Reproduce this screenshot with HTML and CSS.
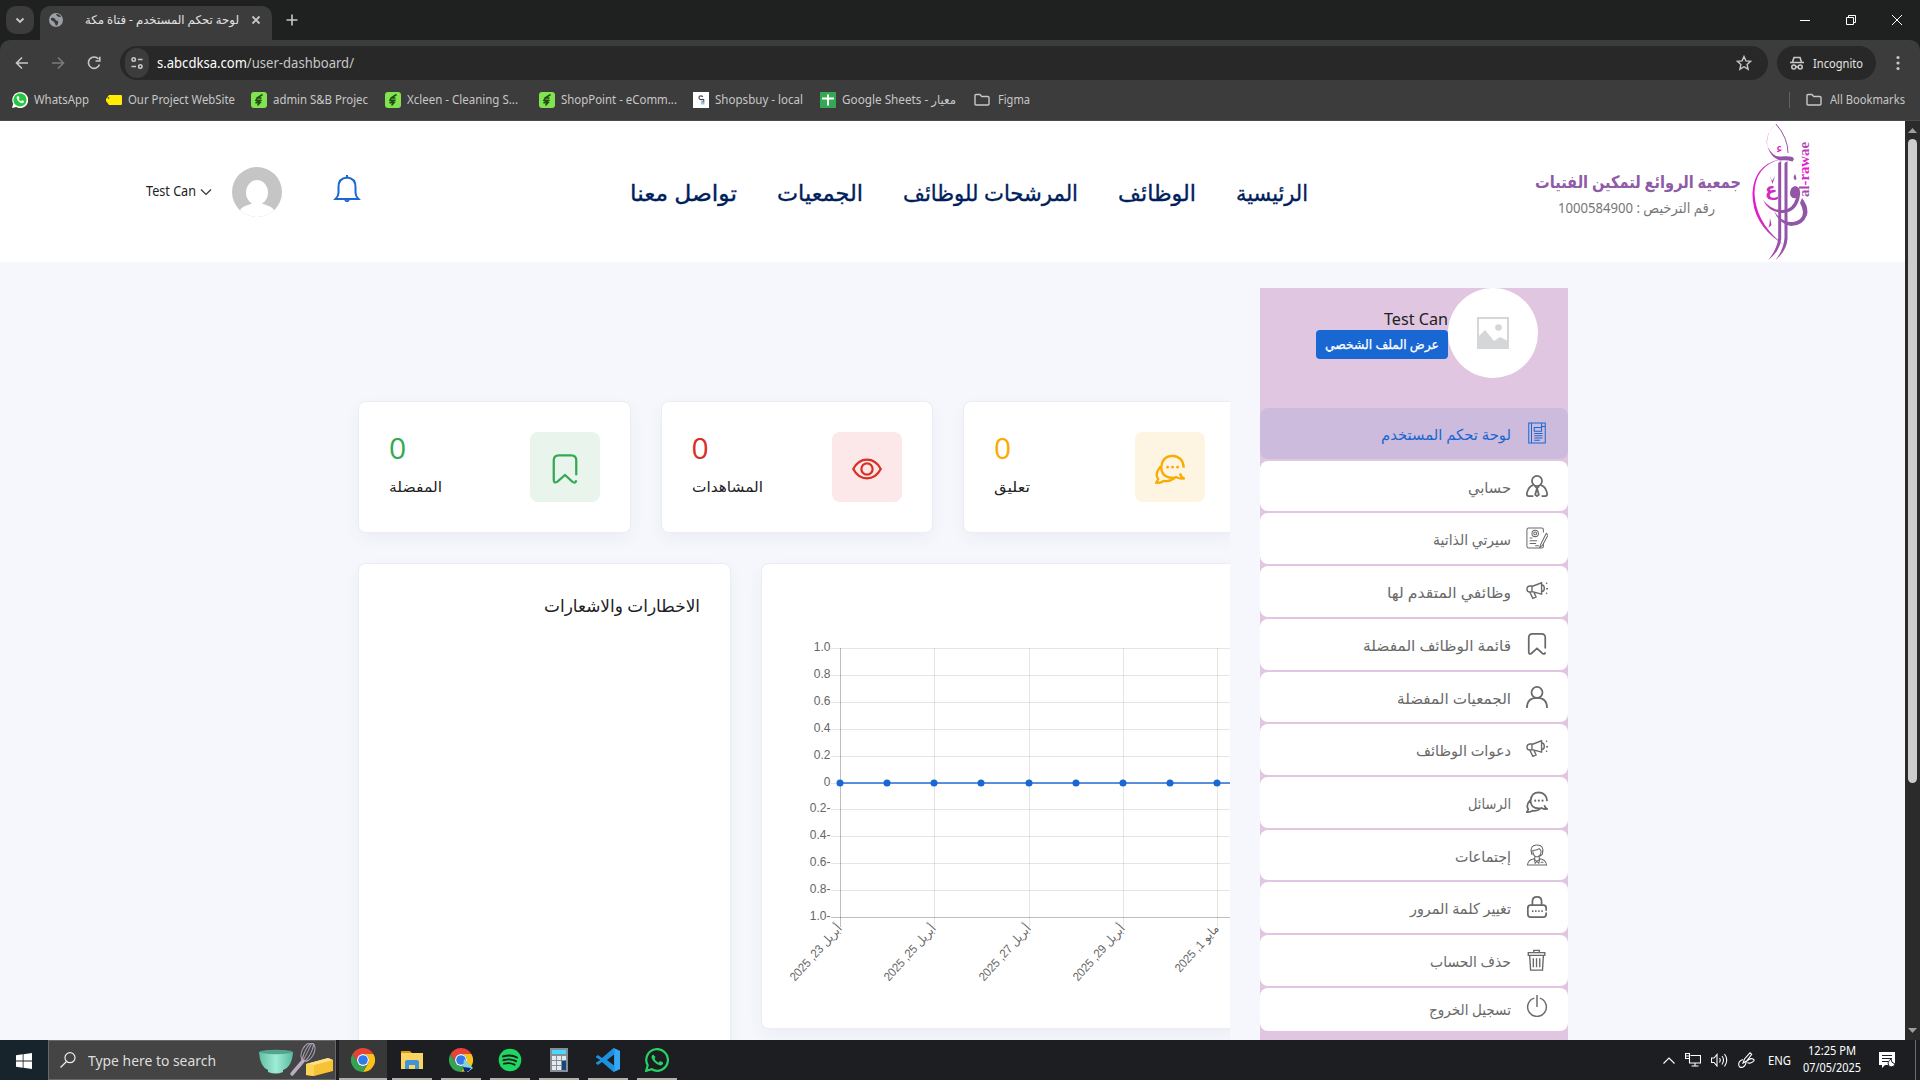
FILE: index.html
```html
<!DOCTYPE html>
<html lang="ar">
<head>
<meta charset="utf-8">
<title>لوحة تحكم المستخدم - فتاة مكة</title>
<link rel="stylesheet" href="styles.css">
</head>
<body>
<svg class="defs" width="0" height="0" aria-hidden="true">
  <defs>
    <symbol id="shopify" viewBox="0 0 16 16"><rect width="16" height="16" rx="3" fill="#82e350"/><path d="M11.500 2.500 6 6 5 8.300h5.500L4.500 10.700H9L6.500 13.500M6 6h4.500" fill="none" stroke="#1f4c12" stroke-width="1.500"/></symbol>
    <symbol id="folder" viewBox="0 0 16 16"><path d="M1 3.500q0-1 1-1h4l1.700 2H14q1 0 1 1V12q0 1-1 1H2q-1 0-1-1z" fill="none" stroke="#c7c7c7" stroke-width="1.400"/></symbol>
    <symbol id="bookmark" viewBox="0 0 24 24"><path d="M21 17V5q0-4-4-4H7Q3 1 3 5v15.500q0 3.300 2.800 1.800L12 16.800l6 5.500q2.500 1.500 3-1.300"/></symbol>
    <symbol id="chat" viewBox="0 0 24 24"><path d="M20 15.500q.8 3 3 4-3 .7-6-1-1 .5-3 .5-9-.5-9-8.500Q6 1.500 14 1.500q8.500.5 9 9.500M4.500 10Q-.5 16 2.500 20L1 23q4 .3 6-1.500 5 1 9-2.500"/><path d="M10 10.500h.1M14 10.500h.1M18 10.500h.1" stroke-linecap="round" stroke-width="2.200"/></symbol>
    <symbol id="horn" viewBox="0 0 24 24"><path d="M17 3 8 6.500H4q-3 .5-3 3.500t3 3h4l9 2.500zM6.500 7v6M4 13l3.500 7 3.500-1.500L8.500 13M17 5q3 .5 3 4t-3 4M22 4l1-1M22 9.500h2M22 14l1 1"/></symbol>
    <symbol id="chrome" viewBox="0 0 24 24"><path d="M1.600 6A12 12 0 0 1 22.400 6H12a6 6 0 0 0-5.200 9z" fill="#e84335"/><path d="M22.400 6A12 12 0 0 1 12 24l5.200-9A6 6 0 0 0 12 6z" fill="#fbc116"/><path d="M1.600 6A12 12 0 0 0 12 24l5.200-9a6 6 0 0 1-10.400 0z" fill="#34a354"/><circle cx="12" cy="12" r="6" fill="#fff"/><circle cx="12" cy="12" r="4.800" fill="#3279ea"/></symbol>
  </defs>
</svg>

<div class="tabs">
  <div class="tab-search"><svg width="10" height="10" viewBox="0 0 10 10"><path d="M1.500 3.500 5 7l3.500-3.500" class="ui bold"/></svg></div>
  <div class="tab">
    <svg width="14" height="14" viewBox="0 0 14 14"><circle cx="7" cy="7" r="7" fill="#9aa0a6"/><path d="M2 5q3-1 4 1t3 2q1 3-2 5-1-3-2-4T2 7zM7 1q0 2 3 3l2 0q-1-3-5-3z" fill="#3c3c3c"/></svg>
    <span class="tab-title"><span dir="rtl" data-w="154">لوحة تحكم المستخدم - فتاة مكة</span></span>
    <svg width="10" height="10" viewBox="0 0 10 10"><path d="m1.500 1.500 7 7m0-7-7 7" class="ui bold"/></svg>
  </div>
  <svg class="new-tab" width="12" height="12" viewBox="0 0 12 12"><path d="M6 .5v11M.5 6h11" class="ui"/></svg>
  <div class="win">
    <svg width="12" height="12" viewBox="0 0 12 12"><path d="M1 6h10" stroke="#fff" shape-rendering="crispEdges"/></svg>
    <svg width="12" height="12" viewBox="0 0 12 12"><path d="M1.500 3.500h7v7h-7zM3.500 3V1.500h7v7H9" fill="none" stroke="#fff"/></svg>
    <svg width="12" height="12" viewBox="0 0 12 12"><path d="m1 1 10 10m0-10L1 11" stroke="#fff"/></svg>
  </div>
</div>

<div class="toolbar">
  <svg class="nav-ic" width="16" height="16" viewBox="0 0 16 16"><path d="M14 8H2.500M8 2.500 2.500 8 8 13.500" class="ui"/></svg>
  <svg class="nav-ic dim" width="16" height="16" viewBox="0 0 16 16"><path d="M2 8h11.500M8 2.500 13.500 8 8 13.500" class="ui"/></svg>
  <svg class="nav-ic" width="16" height="16" viewBox="0 0 16 16"><path d="M13.500 9.500a5.700 5.700 0 1 1-1-5.500M13.800 1.800V6H9.500" class="ui"/></svg>
  <div class="omnibox">
    <span class="site"><svg width="14" height="14" viewBox="0 0 14 14"><path d="M8 3.500h4.500M1.500 10.500H6" class="ui"/><circle cx="3.700" cy="3.500" r="1.700" class="ui"/><circle cx="10.300" cy="10.500" r="1.700" class="ui"/></svg></span>
    <span class="url" data-w="197">s.abcdksa.com<i>/user-dashboard/</i></span>
    <svg class="star" width="16" height="16" viewBox="0 0 16 16"><path d="m8 1.500 1.900 4.400 4.800.4-3.600 3.200 1 4.700L8 11.700l-4.100 2.500 1-4.700L1.300 6.300l4.800-.4z" fill="none" stroke="#c7c7c7" stroke-width="1.400"/></svg>
  </div>
  <div class="incognito"><svg width="16" height="16" viewBox="0 0 16 16"><path d="M1 7.500h14M3.500 7 5 2.500h6L12.500 7M6.500 11.700h3" class="ui"/><circle cx="4.800" cy="12" r="2" class="ui"/><circle cx="11.200" cy="12" r="2" class="ui"/></svg><span data-w="50">Incognito</span></div>
  <svg class="dots" width="4" height="16" viewBox="0 0 4 16"><g fill="#c7c7c7"><circle cx="2" cy="2.500" r="1.600"/><circle cx="2" cy="8" r="1.600"/><circle cx="2" cy="13.500" r="1.600"/></g></svg>
</div>

<div class="bookmarks">
  <div class="bm"><svg viewBox="0 0 16 16"><path d="M0 16l1.200-4.200A8 8 0 1 1 4.300 15z" fill="#fff"/><circle cx="8" cy="7.900" r="6.600" fill="#24c73f"/><path d="M5.300 4.300q-1.500 1.500.5 4.100t4.800 2.800q2-.8 1.200-2.200L10 8.200l-1 1Q7.500 8.700 6.700 7l.8-1-.8-1.800z" fill="#fff"/></svg><span data-w="55">WhatsApp</span></div>
  <div class="bm"><svg viewBox="0 0 16 16"><path d="M3 3h12q1 0 1 1v8q0 1-1 1H3l-3-4V7z" fill="#ffec00"/><circle cx="2.500" cy="6" r=".8" fill="#333"/></svg><span data-w="107">Our Project WebSite</span></div>
  <div class="bm"><svg><use href="#shopify"/></svg><span data-w="95">admin S&amp;B Projec</span></div>
  <div class="bm"><svg><use href="#shopify"/></svg><span data-w="111">Xcleen - Cleaning S...</span></div>
  <div class="bm shop"><svg><use href="#shopify"/></svg><span data-w="116">ShopPoint - eComm...</span></div>
  <div class="bm"><svg viewBox="0 0 16 16"><rect width="16" height="16" fill="#fff"/><path d="M10 4.500Q6 3 6 5.500t3 2 1 3" fill="none" stroke="#444" stroke-width="1.200"/><path d="M8 8.500h3.500v4H8z" fill="#7aa3d8" opacity=".7"/></svg><span data-w="88">Shopsbuy - local</span></div>
  <div class="bm"><svg viewBox="0 0 16 16"><rect width="16" height="16" rx="1" fill="#34a853"/><path d="M8 2.500v11M2 6.500h12" stroke="#fff" stroke-width="2"/></svg><span data-w="114">Google Sheets - معيار</span></div>
  <div class="bm figma"><svg><use href="#folder"/></svg><span data-w="32">Figma</span></div>
  <div class="bm all"><svg><use href="#folder"/></svg><span data-w="75">All Bookmarks</span></div>
</div>

<div class="viewport">
<div class="page">
  <header class="header">
    <span class="hname" data-w="50">Test Can</span>
    <svg class="hchev" width="12" height="8" viewBox="0 0 12 8"><path d="m1 1.500 5 5 5-5" fill="none" stroke="#333" stroke-width="1.200"/></svg>
    <svg class="havatar" width="50" height="50" viewBox="0 0 50 50"><defs><clipPath id="round"><circle cx="25" cy="25" r="25"/></clipPath></defs><g clip-path="url(#round)"><path d="M0 0h50v50H0z" fill="#c5c5c5"/><ellipse cx="25" cy="25.500" rx="11" ry="12.500" fill="#fff"/><path d="M20 36.500h10l8 3q4 2 5 6v6H7v-6q1-4 5-6z" fill="#fff"/></g></svg>
    <svg class="bell" width="28" height="30" viewBox="0 0 28 30"><path d="M14 3.500q8.500.7 8.500 9.500v6q0 3 3 6h-23q3-3 3-6v-6Q5.500 4.200 14 3.500zM14 1v3M12 26q2 2.500 4 0" fill="none" stroke="#1967d2" stroke-width="2"/></svg>
    <nav class="menu">
      <span data-w="107">تواصل معنا</span><span data-w="86">الجمعيات</span><span data-w="175">المرشحات للوظائف</span><span data-w="78">الوظائف</span><span data-w="72">الرئيسية</span>
    </nav>
    <div class="brand"><b data-w="206">جمعية الروائع لتمكين الفتيات</b><span dir="rtl" data-w="157">رقم الترخيص : 1000584900</span></div>
    <svg class="emblem" width="60" height="138" viewBox="0 0 60 138">
      <defs>
        <linearGradient id="ink" x1="0" y1="0" x2="60" y2="0" gradientUnits="userSpaceOnUse"><stop offset="0" stop-color="#f50fd0"/><stop offset=".5" stop-color="#9455a8"/><stop offset="1" stop-color="#8f57a6"/></linearGradient>
        <linearGradient id="ink2" x1="0" y1="0" x2="55" y2="0" gradientUnits="userSpaceOnUse"><stop offset="0" stop-color="#8f57a6"/><stop offset=".5" stop-color="#f50fd0"/><stop offset="1" stop-color="#a34fb0"/></linearGradient>
      </defs>
      <g fill="url(#ink)">
        <path d="M25 .5Q8 18 22 31q3 3 8 2.500 8-.5 11.500.5l1.500 2-1.500 2.500q-6-2-13-1Q20 34 17 25 13 12 25 .5z"/>
        <path d="M33 35.500Q4 41 3.500 70q1 30 29.500 52Q1 102 1.500 70 3 40 33 35.500z"/>
        <path d="M27.200 40l3-2v78q-1 12-13 21 9-11 10-22zM33.500 40l3-2v78q-1 12-12 21 8-10 9-22z"/>
        <path d="M44 63q6 1 5 9-2 16-16 18-15 0-21-13 9 11 20 10 10-1 13-12-5 1-6-4 0-7 5-8z"/>
        <path d="M51 75q7 9 5 17-4 11-16 11-12-2-17-15 8 12 19 11 10-2 10-10-1-6-3-9z"/>
        <path d="M18.500 52l2.500 6 3-5-2.500 8zM44 51q-3 5 .5 6 2-1-.5-6zM19 95l1.500 7-3 3 1-4z"/>
      </g>
      <path d="M25 1q12 14 12 29" fill="none" stroke="#9455a8"/>
      <text x="25" y="30" class="calli">ء</text><text x="14" y="73" class="calli big">ع</text>
      <text transform="translate(57.500 74) rotate(-90)" class="latin" fill="url(#ink2)" textLength="55" lengthAdjust="spacingAndGlyphs">al-rawae</text>
    </svg>
  </header>

  <div class="content">
    <main class="main">
      <section class="stats">
        <div class="card stat green"><div class="copy"><strong>0</strong><span data-w="53">المفضلة</span></div><div class="tile"><svg viewBox="0 0 24 24"><use href="#bookmark"/></svg></div></div>
        <div class="card stat red"><div class="copy"><strong>0</strong><span data-w="71">المشاهدات</span></div><div class="tile"><svg viewBox="0 0 24 24"><path d="M1 12Q5 4.500 12 4.500T23 12q-4 7.500-11 7.500T1 12z"/><circle cx="12" cy="12" r="4.500"/></svg></div></div>
        <div class="card stat amber"><div class="copy"><strong>0</strong><span data-w="36">تعليق</span></div><div class="tile"><svg viewBox="0 0 24 24"><use href="#chat"/></svg></div></div>
      </section>
      <section class="panels">
        <div class="card notices"><span data-w="156">الاخطارات والاشعارات</span></div>
        <div class="card graph">
          <svg id="chart" width="468" height="462" viewBox="762 564 468 462"></svg>
        </div>
      </section>
    </main>

    <aside class="side">
      <div class="profile">
        <div class="who"><span class="pname" data-w="64">Test Can</span><span class="pbtn"><span data-w="114">عرض الملف الشخصي</span></span></div>
        <div class="photo"><svg width="32" height="32" viewBox="0 0 32 32"><path d="M1 1h30v30H1z" fill="none" stroke="#d5d6d8" stroke-width="2"/><path d="m1 20 7-7 9 11 6-4 8 4v7H1z" fill="#d5d6d8"/><circle cx="21.500" cy="10.500" r="3.300" fill="#d5d6d8"/></svg></div>
      </div>
      <div class="item active"><span data-w="130">لوحة تحكم المستخدم</span><svg viewBox="0 0 24 24"><path d="M3 1h18v22H3zM6 1v22M9 6h8v4H9zM17 1v4h4M9 12.500h9M9 15h9M9 17.500h9M9 20h6"/></svg></div>
      <div class="item"><span data-w="43">حسابي</span><svg class="heavy" viewBox="0 0 24 24"><circle cx="12" cy="6.500" r="5.500"/><path d="M8 11q-5 1-7 8.500Q.5 23 3 23h5M16 11q5 1 7 8.500.5 3.500-2 3.500h-4M9.500 12l2.500 2.500 2.500-2.500M12 14.500l-2 7 2 1.500 2-1.500z"/></svg></div>
      <div class="item"><span data-w="78">سيرتي الذاتية</span><svg viewBox="0 0 24 24"><path d="M19 6V3q0-2-2-2H3Q1 1 1 3v18q0 2 2 2h14q2 0 2-2v-3M4 15h8M4 18h7M4 12h3M10 20.500h4M22 7l-6 12-1 3 3-2 6-11z"/><circle cx="10" cy="7" r="3.500"/><circle cx="10" cy="7" r="1.500"/></svg></div>
      <div class="item"><span data-w="124">وظائفي المتقدم لها</span><svg class="mid" viewBox="0 0 24 24"><use href="#horn"/></svg></div>
      <div class="item"><span data-w="148">قائمة الوظائف المفضلة</span><svg class="heavy" viewBox="0 0 24 24"><use href="#bookmark"/></svg></div>
      <div class="item"><span data-w="114">الجمعيات المفضلة</span><svg class="heavy" viewBox="0 0 24 24"><circle cx="12" cy="7" r="6"/><path d="M1 24q0-11 11-11t11 11"/></svg></div>
      <div class="item"><span data-w="95">دعوات الوظائف</span><svg class="mid" viewBox="0 0 24 24"><use href="#horn"/></svg></div>
      <div class="item"><span data-w="43">الرسائل</span><svg class="heavy" viewBox="0 0 24 24"><use href="#chat"/></svg></div>
      <div class="item"><span data-w="56">إجتماعات</span><svg viewBox="0 0 24 24"><path d="M6 10Q4 1 12 1t6 9M7.500 7q4 0 7-2 2 2 2 3-.5 6-4.500 6T7.500 8zM6 7v4h2M18 7v4q-2 3-5 2M9.500 14v3l2.500 2 2.500-2v-3M9 16q-7 1-7.500 7h21q-.5-6-7.500-7M9 16l1 5 2-2 2 2 1-5M16 20h3"/></svg></div>
      <div class="item"><span data-w="101">تغيير كلمة المرور</span><svg class="heavy" viewBox="0 0 24 24"><path d="M22 18v2q0 3-3 3H5q-3 0-3-3v-7q0-3 3-3h14q3 0 3 3v3M7 10V6q0-5 5-5t5 5v4"/><path d="M6.500 16.500h12" stroke-dasharray="1.600 1.800"/></svg></div>
      <div class="item"><span data-w="81">حذف الحساب</span><svg class="heavy" viewBox="0 0 24 24"><path d="M2.500 4h18v3h-18zM8.500 4V1.500h6V4M4 7l1 16h13l1-16M8 10v10M11.500 10v10M15 10v10" stroke-width="1.500"/></svg></div>
      <div class="item last"><span data-w="82">تسجيل الخروج</span><svg class="heavy" viewBox="0 0 24 24"><path d="M12 0v13M9 3.400a10.200 10.200 0 1 0 6 0" stroke-width="1.600"/></svg></div>
    </aside>
  </div>
</div>
<div class="scrollbar"><svg width="9" height="5" viewBox="0 0 9 5"><path d="M4.500 0 9 5H0z" fill="#9f9f9f"/></svg><div class="thumb"></div><svg width="9" height="5" viewBox="0 0 9 5"><path d="M4.500 5 9 0H0z" fill="#9f9f9f"/></svg></div>
</div>

<footer class="taskbar">
  <div class="start"><svg width="16" height="16" viewBox="0 0 16 16"><path d="M0 2.200 6.700 1.300v6.300H0zM7.500 1.200 16 0v7.600H7.500zM0 8.400h6.700v6.300L0 13.800zM7.500 8.400H16V16l-8.500-1.200z" fill="#fff"/></svg></div>
  <div class="search">
    <svg width="16" height="16" viewBox="0 0 16 16"><circle cx="10" cy="5.700" r="5" fill="none" stroke="#eee" stroke-width="1.200"/><path d="M6.500 9.500.5 15.500" stroke="#eee" stroke-width="1.200"/></svg>
    <span data-w="128">Type here to search</span>
    <svg class="bake" width="74" height="34" viewBox="0 0 74 34"><defs><linearGradient id="mint"><stop offset="0" stop-color="#61bfa4"/><stop offset=".5" stop-color="#a0ecd5"/><stop offset="1" stop-color="#59bb9e"/></linearGradient></defs><path d="M0 9q1 15 9 18v2q8 3 15 0v-2q9-3 10-18-17-4-34 0z" fill="url(#mint)"/><ellipse cx="17" cy="9" rx="16.500" ry="2.200" fill="#54a58e"/><g fill="none" stroke="#a9a0b5" stroke-width="1"><ellipse cx="49" cy="9" rx="6" ry="10" transform="rotate(27 49 9)"/><ellipse cx="49" cy="9" rx="3" ry="10" transform="rotate(27 49 9)"/><path d="m53 0-9 18"/></g><path d="m44 18-11 13" stroke="#b9adc2" stroke-width="3.500" stroke-linecap="round"/><path d="m47 21 22-6 5 2v11l-19 5-8-1z" fill="#f7c233"/><path d="m47 21 22-6 5 2-19 5z" fill="#ffe08a"/><path d="M47 21l8 1v11l-8-1z" fill="#ffd454"/></svg>
  </div>
  <div class="app on"><svg viewBox="0 0 24 24"><use href="#chrome"/></svg></div>
  <div class="app"><svg viewBox="0 0 24 24"><path d="M1 3h9l2 2h-11z" fill="#d89b0d"/><path d="M1 5h22v16H1z" fill="#fcd462"/><path d="M5 21v-7q0-2 2-2h10q2 0 2 2v7h-4v-4H9v4z" fill="#4194d8"/></svg></div>
  <div class="app"><svg viewBox="0 0 24 24"><use href="#chrome"/><path d="m15 11 9 9-5 4-5-4z" fill="#84d5d6"/><path d="m14 19 8 1-2 3h-5z" fill="#0b2680"/></svg></div>
  <div class="app"><svg viewBox="0 0 24 24"><circle cx="12" cy="12" r="11.300" fill="#1ed760"/><path d="M5 8.500q8-2.500 14 1M5.500 12.200q7-2 12.500 1M6 15.700q6-1.500 10.500 1" fill="none" stroke="#1b1c20" stroke-width="1.900" stroke-linecap="round"/></svg></div>
  <div class="app"><svg viewBox="0 0 24 24"><path d="M3 0h18v24H3z" fill="#858d96"/><path d="M5 2h14v4H5z" fill="#48d8ff"/><path d="M5 8h4v4H5zm5 0h4v4h-4zm5 0h4v4h-4zM5 13h4v4H5zm5 0h4v4h-4zM5 18h4v4H5zm5 0h4v4h-4z" fill="#e7eaec"/><path d="M15 13h4v9h-4z" fill="#17457d"/></svg></div>
  <div class="app"><svg viewBox="0 0 24 24"><path d="M17.500 0 24 3v18l-6.500 3L6 14l-4 3-2-1.500v-7L2 7l4 3zM18 6.500 11 12l7 5.500z" fill="#1f8fe0" fill-rule="evenodd"/><path d="M17.500 0 24 3v18l-6.500 3 1-1V1z" fill="#35a8f3"/><path d="M0 9.500 4.300 12 0 14.500z" fill="#1c1d21"/></svg></div>
  <div class="app"><svg viewBox="0 0 24 24"><path d="m1.200 22.800 1.500-5.600A10.800 10.800 0 1 1 6.800 21.300z" fill="none" stroke="#25d366" stroke-width="2.200"/><path d="M8 6.500q-3 2 0 6t7.500 5q3-.8 2.500-3l-3-1.400-1.300 1.600q-3-1-4.200-4L10.500 9z" fill="#25d366"/></svg></div>
  <div class="tray">
    <svg width="12" height="7" viewBox="0 0 12 7"><path d="m.5 6.500 5.500-5.500 5.500 5.500" class="tr"/></svg>
    <svg width="16" height="14" viewBox="0 0 16 14"><path d="M5.500 2.500h10v7.500H4.500V6M10 10v3M6.500 13h7M.5.500h4v5h-4zM.5 3h4" class="tr"/></svg>
    <svg width="17" height="14" viewBox="0 0 17 14"><path d="M.5 5v4.500H3L6 13V1.500L3 5zM8.500 5q1.500 2 0 4.500M11 3q3 4 0 8.500M13.500 1q4.500 6 0 12.500" class="tr"/></svg>
    <svg width="17" height="16" viewBox="0 0 17 16"><path d="m5 11 1.500-4L12 .8l1.700 1.500-5 6.700zM5 7.500Q.5 9 .7 12.500t4 2.700Q8 13.500 8 10q4-4.500 7-3t-2.500 4q-2 .5-3-.5" class="tr"/></svg>
    <span class="lang" data-w="23">ENG</span>
    <div class="clock"><span data-w="48">12:25 PM</span><span data-w="58">07/05/2025</span></div>
    <svg class="note" width="17" height="16" viewBox="0 0 17 16"><path d="M0 0h16v13H6l-3 3v-3H0z" fill="#fff"/><path d="M3 3.500h10M3 6.500h10M3 9.500h6" stroke="#1d2023" stroke-width="1.200"/><path d="M12 7q0 4 4 5-1 3-4 3-3-.5-3-4 1-3 3-4z" fill="#fff" stroke="#1d2023"/></svg>
    <span class="peek"></span>
  </div>
</footer>
<script src="app.js"></script>
</body>
</html>
```
FILE: styles.css
```css
* { box-sizing: border-box; }
body { margin: 0; width: 1920px; height: 1080px; overflow: hidden; display: flex; flex-direction: column; background: #1f2120; font-family: "Noto Sans", "DejaVu Sans", sans-serif; }
svg { display: block; flex: none; }
.defs { position: absolute; }
[data-w] { display: inline-block; white-space: nowrap; flex: none; transform-origin: 0 50%; }
.ui { fill: none; stroke: #c7c7c7; stroke-width: 1.6; }
.bold { stroke-width: 1.9; }

.tabs { height: 40px; flex: none; background: #1f2120; display: flex; align-items: center; padding-left: 6px; }
.tab-search { width: 28px; height: 28px; border-radius: 10px; background: #3c3c3c; display: grid; place-items: center; margin-right: 6px; }
.tab { width: 232px; height: 34px; align-self: flex-end; background: #3c3c3c; border-radius: 10px 10px 0 0; display: flex; align-items: center; padding: 0 11px 6px 9px; }
.tab-title { margin-left: 22px; margin-right: 12px; font: 12px/18px "Noto Sans", "DejaVu Sans", sans-serif; color: #e3e3e3; display: flex; }
.new-tab { margin-left: 14px; }
.win { margin-left: auto; display: flex; gap: 34px; padding-right: 17px; }

.toolbar { height: 46px; flex: none; background: #3c3c3c; border-radius: 10px 10px 0 0; display: flex; align-items: center; padding: 0 20px 0 14px; }
.nav-ic { margin-right: 20px; }
.nav-ic:nth-child(3) { margin-right: 18px; }
.dim { opacity: .45; }
.omnibox { width: 1648px; height: 34px; border-radius: 17px; background: #282828; display: flex; align-items: center; padding: 0 16px 0 5px; }
.site { width: 24px; height: 30px; border-radius: 12px; background: #3c3c3c; display: grid; place-items: center; margin-right: 8px; }
.url { font-size: 14px; line-height: 20px; color: #fff; }
.url i { font-style: normal; color: #c7c7c7; }
.star { margin-left: auto; }
.incognito { margin-left: 9px; width: 99px; height: 34px; border-radius: 17px; background: #282828; display: flex; align-items: center; gap: 8px; padding-left: 12px; font-size: 12px; color: #e3e3e3; }
.dots { margin-left: 20px; }

.bookmarks { height: 35px; flex: none; background: #3c3c3c; border-bottom: 1px solid #4a4a4a; display: flex; align-items: center; padding: 0 15px 7px 12px; gap: 16.5px; font-size: 12px; color: #c7c7c7; }
.bm { display: flex; align-items: center; gap: 6px; height: 20px; }
.bm svg { width: 16px; height: 16px; }
.shop { margin-left: 4.5px; }
.figma { gap: 8px; margin-left: 2px; }
.all { gap: 8px; margin-left: auto; border-left: 1px solid #5f6063; padding-left: 16px; height: 16px; }

.viewport { height: 919px; flex: none; display: flex; background: #f5f7fc; }
.page { width: 1905px; height: 919px; overflow: hidden; }
.scrollbar { width: 15px; background: #2b2b2b; display: flex; flex-direction: column; align-items: center; padding: 7px 0; }
.thumb { width: 9px; height: 644px; border-radius: 5px; background: #cdcdcd; margin: 6px 0 auto; }

.header { height: 141px; background: #fff; display: flex; align-items: center; padding-left: 146px; }
.hname { font-size: 14px; color: #202124; margin-top: -2px; }
.hchev { margin-left: 4px; }
.havatar { margin-left: 20px; }
.bell { margin-left: 51px; margin-top: -5px; }
.menu { display: flex; gap: 40px; margin-left: 269px; font: 500 22px/30px "Noto Sans", "DejaVu Sans", sans-serif; color: #00205c; }
.menu span { -webkit-text-stroke: .35px #00205c; }
.brand { width: 206px; flex: none; margin-left: 227px; display: flex; flex-direction: column; align-items: flex-start; font-size: 17px; color: #8f5ba8; margin-top: 6px; }
.brand b { line-height: 26px; }
.brand span { font-size: 14px; line-height: 26px; color: #777; margin-left: 23px; }
.emblem { margin-left: 10px; }
.calli { font: 14px "DejaVu Sans", sans-serif; fill: #e01bc8; }
.big { font: 700 18px "DejaVu Sans", sans-serif; fill: #d02bc2; }
.latin { font: 700 14px "Liberation Serif", serif; }

.content { display: flex; padding: 26px 0 0 342px; }
.main { width: 888px; height: 770px; padding: 113px 0 0 16px; overflow: hidden; flex: none; }
.card { background: #fff; border: 1px solid #ecedf2; border-radius: 8px; box-shadow: 0 6px 15px rgba(64, 79, 104, .05); flex: none; }
.stats { display: flex; gap: 30px; }
.stat { width: 272.5px; height: 132px; padding: 29px 30px; display: flex; justify-content: space-between; }
.copy { display: flex; flex-direction: column; align-items: flex-start; color: #202124; font-size: 14px; line-height: 22px; }
.copy strong { font: 400 30px/40px "Open Sans", sans-serif; margin: -3px 0 8px; }
.tile { width: 70px; height: 70px; border-radius: 8px; display: grid; place-items: center; margin-top: 1px; }
.tile svg { width: 30px; height: 30px; margin-top: 3px; fill: none; stroke: currentColor; stroke-width: 1.8; }
.green .tile, .green strong { color: #34a853; }
.green .tile { background: #e9f4ed; }
.red .tile, .red strong { color: #d93025; }
.red .tile { background: #fce8e8; }
.amber .tile, .amber strong { color: #f9ab00; }
.amber .tile { background: #fef4e2; }
.panels { display: flex; gap: 30px; margin-top: 30px; align-items: flex-start; }
.notices { width: 373px; height: 520px; padding: 29px 30px; display: flex; justify-content: flex-end; align-items: flex-start; font-size: 17px; line-height: 26px; color: #202124; }
.graph { width: 700px; height: 466px; }
#chart text { font: 12px "Liberation Sans", "DejaVu Sans", sans-serif; fill: #666; direction: rtl; }
.grid { stroke: #000; stroke-opacity: .1; }
.axis { stroke: #000; stroke-opacity: .25; }
.series { stroke: #1967d2; stroke-opacity: .7; stroke-width: 2; }
.point { fill: #1967d2; }

.side { width: 308px; height: 770px; margin-left: 30px; background: #e0c6e1; display: flex; flex-direction: column; gap: 2px; flex: none; }
.profile { height: 118px; display: flex; justify-content: flex-end; padding-right: 30px; }
.who { display: flex; flex-direction: column; align-items: flex-end; padding-top: 19px; }
.pname { font-size: 17px; line-height: 23px; color: #202124; }
.pbtn { width: 132px; height: 29px; border-radius: 4px; background: #1967d2; color: #fff; font-size: 13px; font-weight: 500; -webkit-text-stroke: .25px #fff; display: flex; align-items: center; justify-content: center; padding-bottom: 1px; }
.photo { width: 90px; height: 90px; border-radius: 50%; background: #fff; display: grid; place-items: center; }
.item { height: 50.73px; flex: none; border-radius: 8px; background: #fff; display: flex; justify-content: flex-end; gap: 15px; padding: 12px 20px 0 0; color: #696969; font-size: 15px; line-height: 28px; }
.item svg { width: 22px; height: 22px; margin-top: 2px; fill: none; stroke: currentColor; stroke-width: 1.1; }
.item .mid { stroke-width: 1.5; }
.item .heavy { stroke-width: 1.9; }
.item.active { background: #ccbbdd; color: #1967d2; }
.item.last { height: 43px; padding-top: 7px; }
.item.last svg { margin-top: 0; }

.taskbar { height: 40px; flex: none; background: #1c1e22; display: flex; }
.start { width: 48px; display: grid; place-items: center; padding-top: 2px; background: #17242c; }
.search { width: 288px; background: #444; border: 1px solid #696969; display: flex; align-items: center; padding-left: 11px; font-size: 15px; color: #dedede; }
.search span { margin-left: 12px; }
.bake { margin-left: auto; margin-right: 2px; }
.app { width: 40px; margin-left: 9px; display: grid; place-items: center; border-bottom: 2px solid #b5b0ac; padding-top: 2px; }
.app svg { width: 24px; height: 24px; }
.app.on { width: 48px; margin-left: 3px; background: #383838; margin-right: -4px; }
.app.on + .app { margin-left: 9px; }
.tray { margin-left: auto; display: flex; align-items: center; padding-right: 4px; color: #fff; font-size: 12px; }
.tray > svg + svg { margin-left: 10px; }
.tr { fill: none; stroke: #fff; stroke-width: 1.1; }
.lang { margin-left: 13px; }
.clock { width: 58px; margin-left: 12px; display: flex; flex-direction: column; align-items: center; line-height: 17px; margin-top: -2px; }
.note { margin-left: 18px; }
.peek { width: 1px; height: 40px; background: #6b6d70; margin-left: 19px; }
```
FILE: app.js
```js
// Bring every label to its designed width.
document.querySelectorAll("[data-w]").forEach(function (el) {
  var w = +el.dataset.w, n = el.getBoundingClientRect().width;
  el.style.transform = "scaleX(" + w / n + ")";
  el.style.marginRight = (w - n) + "px";
});

// Profile views chart.
var out = "";
var rows = [["1.0", 648.5], ["0.8", 675.5], ["0.6", 702.5], ["0.4", 729.5], ["0.2", 756.5], ["0", 783.5],
  ["-0.2", 809.5], ["-0.4", 836.5], ["-0.6", 863.5], ["-0.8", 890.5], ["-1.0", 917.5]];
rows.forEach(function (r) {
  out += '<path class="' + (r[0] === "-1.0" ? "axis" : "grid") + '" d="M831 ' + r[1] + 'H1240"/>';
  out += '<text x="830.5" y="' + (r[1] + 2.5) + '">' + r[0] + '</text>';
});
var cols = [["أبريل 23, 2025", 840.5], ["أبريل 25, 2025", 934.5], ["أبريل 27, 2025", 1029.5], ["أبريل 29, 2025", 1123.5], ["مايو 1, 2025", 1217.5]];
cols.forEach(function (c, i) {
  out += '<path class="' + (i ? "grid" : "axis") + '" d="M' + c[1] + ' 648V927"/>';
  out += '<text transform="translate(' + (c[1] + 2) + ' 929) rotate(-48) scale(.94 1)">' + c[0] + '</text>';
});
out += '<path class="series" d="M840 783H1240"/>';
[840, 887, 934, 981, 1029, 1076, 1123, 1170, 1217].forEach(function (x) {
  out += '<circle class="point" cx="' + x + '" cy="783" r="3.5"/>';
});
document.getElementById("chart").innerHTML = out;
```
